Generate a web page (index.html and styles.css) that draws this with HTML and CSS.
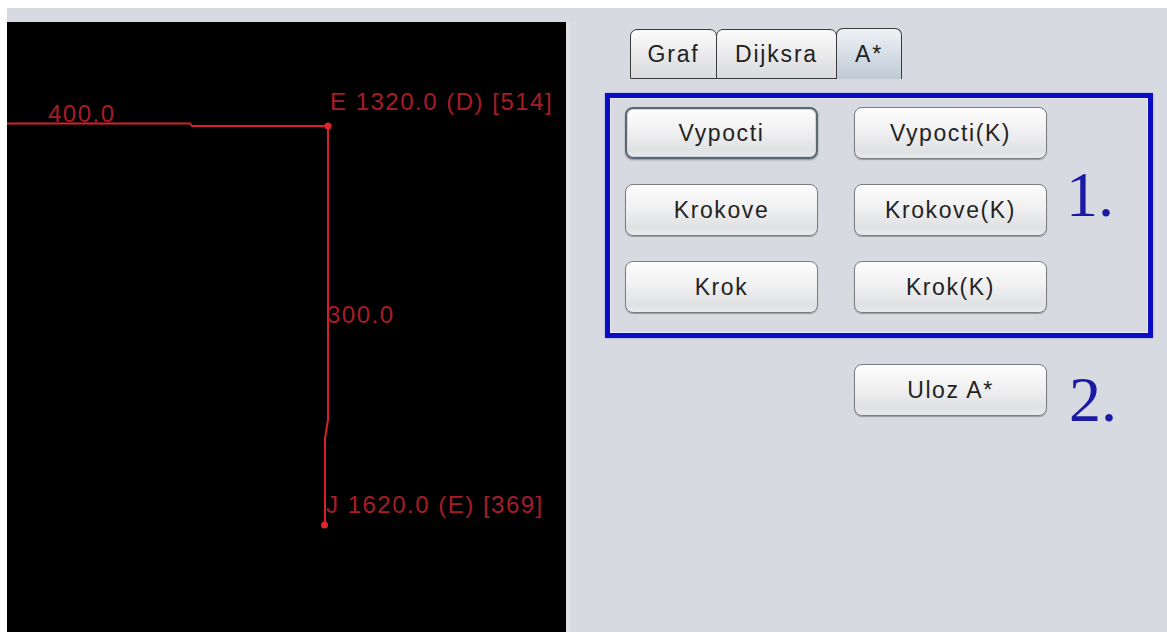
FILE: index.html
```html
<!DOCTYPE html>
<html lang="sk">
<head>
<meta charset="utf-8">
<title>A* – hľadanie cesty</title>
<link rel="stylesheet" href="styles.css">
</head>
<body>
<div class="frame">
  <div class="canvas">
    <svg class="graph" width="559" height="610" viewBox="0 0 559 610">
      <path class="edge" d="M0 101.5 H183 L185 104 H321"/>
      <path class="edge" d="M321 104 V398 L318 416 V503"/>
      <circle class="node" cx="321" cy="104" r="3.5"/>
      <circle class="node" cx="317.5" cy="503" r="3.5"/>
      <text class="label" x="41" y="100">400.0</text>
      <text class="label" x="323" y="88">E 1320.0 (D) [514]</text>
      <text class="label" x="320" y="301">300.0</text>
      <text class="label" x="319" y="491">J 1620.0 (E) [369]</text>
    </svg>
  </div>

  <div class="side">
    <div class="tabs">
      <div class="tab tab-graf">Graf</div>
      <div class="tab tab-dijk">Dijksra</div>
      <div class="tab tab-astar selected">A*</div>
    </div>

    <div class="group">
      <div class="grid">
        <button class="btn focused">Vypocti</button>
        <button class="btn">Vypocti(K)</button>
        <span class="mark mark-one">1.</span>
        <button class="btn">Krokove</button>
        <button class="btn">Krokove(K)</button>
        <button class="btn">Krok</button>
        <button class="btn">Krok(K)</button>
      </div>
    </div>

    <div class="save-row">
      <button class="btn">Uloz A*</button>
      <span class="mark">2.</span>
    </div>
  </div>
</div>
</body>
</html>
```

FILE: styles.css
```css
html, body {
  margin: 0;
  padding: 0;
  background: #ffffff;
  overflow: hidden;
}

.frame {
  margin: 8px 0 0 7px;
  height: 624px;
  display: flex;
  background: #d7dae0;
  font-family: "Liberation Sans", Arial, sans-serif;
}

/* drawing area */
.canvas {
  width: 559px;
  margin-top: 14px;
  background: #000000;
  border-right: 4px solid #dfe2e7;
  flex: none;
}

.graph {
  display: block;
}

.edge {
  fill: none;
  stroke: #d4202c;
  stroke-width: 2;
}

.node {
  fill: #e0242f;
}

.label {
  font-family: "Liberation Sans", Arial, sans-serif;
  font-size: 24px;
  letter-spacing: 1.5px;
  fill: #a81c27;
}

/* control side */
.side {
  flex: 1;
  display: flex;
  flex-direction: column;
  align-items: flex-start;
}

.tabs {
  display: flex;
  align-items: flex-end;
  margin: 20px 0 0 60px;
  height: 51px;
}

.tab {
  box-sizing: border-box;
  height: 50px;
  display: flex;
  align-items: center;
  justify-content: center;
  border: 1.5px solid #3a3a3a;
  border-radius: 7px 7px 0 0;
  background: linear-gradient(#fbfbfb, #e9e9eb 55%, #d9dadd);
  color: #222222;
  font-size: 23px;
  letter-spacing: 1.8px;
}

.tab-graf { width: 87px; }
.tab-dijk { width: 121px; margin-left: -1px; }
.tab-astar { width: 66px; margin-left: -1px; }

.tab.selected {
  height: 51px;
  border-bottom: none;
  background: linear-gradient(#eef2f6, #d6dee6 50%, #bfcad5);
}

.group {
  box-sizing: border-box;
  margin: 14px 0 0 35px;
  width: 548px;
  height: 245px;
  border: 5px solid #0c0cc6;
  box-shadow: inset 0 0 0 1px #e6eaff, 0 0 2px rgba(40, 60, 255, 0.35);
  padding: 9px 0 0 15px;
}

.grid {
  display: grid;
  grid-template-columns: 193px 193px auto;
  grid-auto-rows: 52px;
  column-gap: 36px;
  row-gap: 25px;
}

.btn {
  box-sizing: border-box;
  width: 193px;
  height: 52px;
  padding: 0;
  border: 1px solid #7c7c7e;
  border-radius: 8px;
  background: linear-gradient(#fdfdfd, #f1f1f2 45%, #e0e1e3 85%, #e9eaeb);
  box-shadow: 0 1px 1px rgba(0, 0, 0, 0.3), inset 0 1px 0 #ffffff;
  color: #232323;
  font-family: "Liberation Sans", Arial, sans-serif;
  font-size: 23px;
  letter-spacing: 1.6px;
}

.btn.focused {
  border: 2px solid #5d6772;
  box-shadow: 0 1px 2px rgba(0, 0, 0, 0.35), inset 0 0 0 1px #c9d6e3;
}

.mark {
  font-family: "Liberation Serif", "Times New Roman", serif;
  font-size: 64px;
  line-height: 1;
  color: #1a1aa4;
}

.mark-one {
  grid-column: 3;
  grid-row: 1 / span 3;
  align-self: center;
  margin-left: -17px;
  margin-top: -30px;
}

.save-row {
  display: flex;
  align-items: flex-start;
  margin: 26px 0 0 284px;
}

.save-row .mark {
  margin-left: 22px;
  margin-top: 4px;
}
```
